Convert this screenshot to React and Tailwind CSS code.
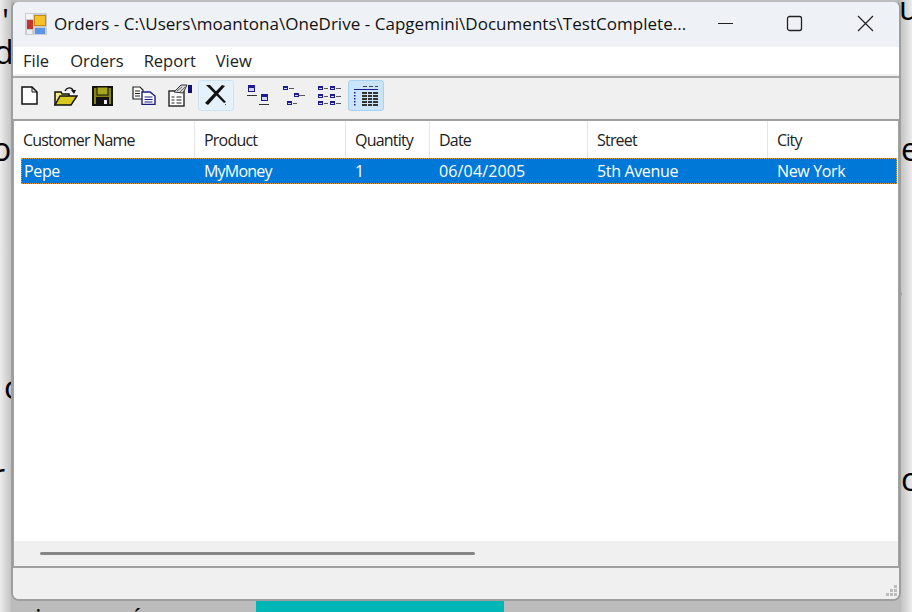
import React from 'react';

const font = { fontFamily: '"Open Sans", "Noto Sans", sans-serif' };

const columns = [
  { title: 'Customer Name', cell: 'Pepe', width: 'w-[181px]', track: 'tracking-[-0.35px]' },
  { title: 'Product', cell: 'MyMoney', width: 'w-[151px]', track: 'tracking-[-0.8px]' },
  { title: 'Quantity', cell: '1', width: 'w-[84px]', track: 'tracking-[-0.35px]' },
  { title: 'Date', cell: '06/04/2005', width: 'w-[158px]', track: 'tracking-[0.15px]' },
  { title: 'Street', cell: '5th Avenue', width: 'w-[180px]', track: 'tracking-[-0.35px]' },
  { title: 'City', cell: 'New York', width: 'flex-1', track: 'tracking-[-0.35px]' },
];

function AppIcon() {
  return (
    <svg width="22" height="22" viewBox="0 0 22 22">
      <rect width="22" height="22" fill="#c9ccd0" />
      <rect x="1" y="1" width="7" height="5" fill="#f4f4f4" />
      <rect x="9.5" y="2.5" width="11" height="10" fill="#f6c22c" stroke="#c08a10" />
      <rect x="2" y="7" width="6" height="9" fill="#c8322b" />
      <rect x="10" y="15" width="10" height="6" fill="#5b96e4" />
      <rect x="2" y="17" width="5" height="4" fill="#f0f0f0" />
    </svg>
  );
}

function NewIcon() {
  return (
    <svg width="17" height="19" viewBox="0 0 17 19">
      <path d="M1 1H11L16 6V18H1Z" fill="#fff" stroke="#111" strokeWidth="1.5" />
      <path d="M11 1V6H16" fill="none" stroke="#111" />
    </svg>
  );
}

function OpenIcon() {
  return (
    <svg width="25" height="20" viewBox="0 0 25 20">
      <path d="M2 19V6H8L9 8H16V10" fill="#f4ee80" stroke="#111" strokeWidth="1.5" />
      <path d="M2 19L7 10H24L18 19Z" fill="#d8c820" stroke="#111" strokeWidth="1.5" />
      <path d="M12 5C14 1 18 1 20 4" fill="none" stroke="#111" strokeWidth="1.4" />
      <path d="M18 4H23L21 8Z" fill="#111" />
    </svg>
  );
}

function SaveIcon() {
  return (
    <svg width="21" height="20" viewBox="0 0 21 20">
      <rect width="21" height="20" fill="#111" />
      <rect x="2" y="2" width="17" height="16" fill="#858510" />
      <rect x="5" y="1" width="11" height="8" fill="#a5a520" stroke="#111" />
      <rect x="4" y="11" width="13" height="9" fill="#111" />
      <rect x="12" y="14" width="3" height="4" fill="#eee" />
    </svg>
  );
}

function CopyIcon() {
  return (
    <svg width="24" height="19" viewBox="0 0 24 19">
      <path d="M1 1H8L11 4V13H1Z" fill="#fff" stroke="#222" strokeWidth="1.2" />
      <path d="M3 5H8M3 7.5H8M3 10H8" stroke="#222" />
      <path d="M10 6H18L23 10V18.5H10Z" fill="#fff" stroke="#1a1a80" strokeWidth="1.4" />
      <path d="M12.5 11H20.5M12.5 13.5H20.5M12.5 16H20.5" stroke="#1a1a80" />
    </svg>
  );
}

function PropsIcon() {
  return (
    <svg width="25" height="23" viewBox="0 0 25 23">
      <rect x="1" y="7" width="15" height="15" fill="#fff" stroke="#222" strokeWidth="1.4" />
      <path d="M3.5 13H6.5M8.5 13H13.5M3.5 16H6.5M8.5 16H13.5M3.5 19H6.5M8.5 19H13.5" stroke="#222" />
      <path d="M6 8L13 1H19L15 9Z" fill="#d8d8d8" stroke="#333" />
      <path d="M9 7L14 3M12 8L17 3" stroke="#666" />
      <rect x="20" y="1" width="4" height="8" fill="#10107a" />
    </svg>
  );
}

function DeleteIcon() {
  return (
    <svg width="22" height="21" viewBox="0 0 22 21">
      <path d="M1 0L5 0L21 17L19 18Z" fill="#111" />
      <path d="M20 1L17 0L0 18L3 20Z" fill="#111" />
      <rect x="20" y="19" width="1" height="1" fill="#666" />
    </svg>
  );
}

function Doc({ x, y, w = 5, h = 4 }) {
  const inner = h > 4 ? 3 : 1;
  return (
    <g>
      <rect x={x} y={y} width={w} height={h} fill="#1c1c90" />
      <rect x={x + 1} y={y + h - inner - 1} width={w - 2} height={inner} fill="#d4d4f2" />
    </g>
  );
}

function Dash({ x, y, w }) {
  return <rect x={x} y={y} width={w} height="1" fill="#555" />;
}

function LargeIcon() {
  return (
    <svg width="22" height="21" viewBox="0 0 22 21">
      <Doc x={1} y={0} w={7} h={7} />
      <rect x="0" y="10" width="10" height="1" fill="#333" />
      <Doc x={14} y={9} w={7} h={7} />
      <rect x="12" y="19" width="10" height="1" fill="#333" />
    </svg>
  );
}

function SmallIcon() {
  return (
    <svg width="22" height="20" viewBox="0 0 22 20">
      <Doc x={0} y={0} />
      <Dash x={6} y={2} w={5} />
      <Doc x={11} y={7} />
      <Dash x={16} y={9} w={6} />
      <Doc x={4} y={15} />
      <Dash x={10} y={17} w={4} />
    </svg>
  );
}

function ListIcon() {
  const rows = [0, 8, 15];
  return (
    <svg width="24" height="20" viewBox="0 0 24 20">
      {rows.map((y) => (
        <g key={y}>
          <Doc x={1} y={y} />
          <Dash x={7} y={y + 2} w={4} />
          <Doc x={13} y={y} />
          <Dash x={19} y={y + 2} w={5} />
        </g>
      ))}
    </svg>
  );
}

function DetailsIcon() {
  const rows = [6, 9, 12, 15, 18];
  return (
    <svg width="26" height="20" viewBox="0 0 26 20">
      <path d="M10 0.5H14M16 0.5H20M22 0.5H25" stroke="#444" />
      <path d="M1 3.5H25" stroke="#1c1c90" />
      {rows.map((y) => (
        <g key={y}>
          <rect x="1" y={y} width="1.5" height="1.5" fill="#1c1c90" />
          <path d={`M9 ${y + 1}H14M15 ${y + 1}H19M20 ${y + 1}H25`} stroke="#333" strokeWidth="2" />
        </g>
      ))}
    </svg>
  );
}

function Tool({ children, active, className = '' }) {
  let look = '';
  if (active === 'soft') look = 'rounded-[3px] border border-[#cde4f7] bg-[#e5f1fb] ';
  if (active === 'strong') look = 'rounded-[3px] border border-[#a6d3f5] bg-[#cce4f7] ';
  return (
    <div className={'flex h-[31px] items-center justify-center ' + look + className}>
      {children}
    </div>
  );
}

function Toolbar() {
  return (
    <div className="flex h-[41px] shrink-0 items-start bg-[#f0f0f0] pl-[8px] pt-[2px]">
      <Tool className="w-[17px]"><NewIcon /></Tool>
      <Tool className="ml-[15px] w-[25px]"><OpenIcon /></Tool>
      <Tool className="ml-[14px] w-[21px]"><SaveIcon /></Tool>
      <Tool className="ml-[19px] w-[24px]"><CopyIcon /></Tool>
      <Tool className="ml-[12px] w-[25px]"><PropsIcon /></Tool>
      <Tool active="soft" className="ml-[5px] w-[36px]"><DeleteIcon /></Tool>
      <Tool className="ml-[13px] w-[22px]"><LargeIcon /></Tool>
      <Tool className="ml-[14px] w-[22px]"><SmallIcon /></Tool>
      <Tool className="ml-[12px] w-[24px]"><ListIcon /></Tool>
      <Tool active="strong" className="ml-[7px] w-[36px]"><DetailsIcon /></Tool>
    </div>
  );
}

function OrdersTable() {
  return (
    <div className="flex min-h-0 flex-1 flex-col border-x border-y-2 border-[#a0a0a0] bg-white">
      <div className="flex h-[37px] shrink-0 text-[#222]">
        {columns.map((col, idx) => (
          <div
            key={col.title}
            className={col.width + ' flex items-center pl-[9px] text-[16px] tracking-[-0.8px] ' + (idx < 5 ? 'border-r border-[#e5e5e5]' : '')}
          >
            {col.title}
          </div>
        ))}
      </div>
      <div className="ml-[7px] mr-[1px] flex h-[26px] shrink-0 border border-dotted border-[#e09a40] bg-[#0078d7] text-white">
        {columns.map((col, idx) => (
          <div
            key={col.title}
            className={(idx === 0 ? 'w-[173px] pl-[2px] ' : col.width + ' pl-[9px] ') + 'flex items-center text-[16px] ' + col.track}
          >
            {col.cell}
          </div>
        ))}
      </div>
      <div className="flex-1" />
      <div className="flex h-[25px] shrink-0 items-center bg-[#f0f0f0] pl-[26px]">
        <div className="h-[3px] w-[435px] rounded-full bg-[#858585]" />
      </div>
    </div>
  );
}

function Backdrop() {
  const glyphs = [
    ['left-[2px] top-[-1px]', "'"],
    ['left-[-6px] top-[30px]', 'd'],
    ['left-[-8px] top-[127px]', 'o'],
    ['left-[4px] top-[365px]', 'c'],
    ['left-[-8px] top-[453px]', 'r'],
    ['left-[901px] top-[127px]', 'e'],
    ['left-[901px] top-[457px]', 'c'],
    ['left-[899px] top-[-14px]', 'u'],
  ];
  return (
    <>
      {glyphs.map(([pos, ch]) => (
        <span key={pos} className={'absolute text-[32px] leading-[44px] text-black ' + pos}>{ch}</span>
      ))}
      <span className="absolute left-[892px] top-[281px] text-[18px] leading-[24px] text-[#444]">e</span>
      <span className="absolute left-[35px] top-[602px] text-[26px] leading-[30px] text-black">i</span>
      <span className="absolute left-[133px] top-[602px] text-[26px] leading-[30px] text-black">í</span>
      <div className="absolute left-[256px] top-[600px] h-[12px] w-[248px] bg-[#00b6b6]" />
    </>
  );
}

export default function App() {
  return (
    <div className="relative h-[612px] w-[912px] overflow-hidden bg-[#bcbcbc]" style={font}>
      <div className="absolute inset-y-0 left-0 w-[11px] bg-gradient-to-r from-[#ececec] to-[#c4c4c4]" />
      <div className="absolute inset-y-0 right-0 w-[11px] bg-gradient-to-l from-[#ececec] to-[#c4c4c4]" />
      <Backdrop />

      <div className="absolute left-[11px] top-0 flex h-[601px] w-[890px] flex-col overflow-hidden rounded-[8px] border-2 border-[#9e9e9e] border-t-[#bdbdbd] bg-[#f0f0f0]">
        <div className="flex h-[45px] shrink-0 items-center bg-[#eef2f7] pb-[2px] pl-[12px]">
          <AppIcon />
          <span className="ml-[7px] w-[640px] truncate text-[17px] tracking-[0.03px] text-[#111]">
            Orders - C:\Users\moantona\OneDrive - Capgemini\Documents\TestComplete...
          </span>
          <svg className="ml-[23px]" width="17" height="17" viewBox="0 0 17 17">
            <path d="M1 8.5H16" stroke="#222" strokeWidth="1.2" />
          </svg>
          <svg className="ml-[52px]" width="17" height="17" viewBox="0 0 17 17">
            <rect x="1.5" y="1.5" width="14" height="14" rx="2" fill="none" stroke="#222" strokeWidth="1.3" />
          </svg>
          <svg className="ml-[54px]" width="17" height="17" viewBox="0 0 17 17">
            <path d="M1 1L16 16M16 1L1 16" stroke="#222" strokeWidth="1.2" />
          </svg>
        </div>

        <div className="flex h-[27px] shrink-0 items-center bg-white pl-[10px] pt-[1px] text-[16.5px] text-[#222]">
          <span>File</span>
          <span className="ml-[21px]">Orders</span>
          <span className="ml-[20px]">Report</span>
          <span className="ml-[20px]">View</span>
        </div>
        <div className="h-[2px] shrink-0 bg-[#f0f0f0]" />
        <div className="h-[2px] shrink-0 bg-[#a8a8a8]" />

        <Toolbar />
        <OrdersTable />

        <div className="relative h-[31px] shrink-0 bg-[#f0f0f0]">
          <svg className="absolute bottom-[1px] right-[1px]" width="14" height="14" viewBox="0 0 14 14" fill="#bdbdbd">
            <rect x="10" y="1" width="3" height="3" />
            <rect x="6" y="5" width="3" height="3" />
            <rect x="10" y="5" width="3" height="3" />
            <rect x="2" y="9" width="3" height="3" />
            <rect x="6" y="9" width="3" height="3" />
            <rect x="10" y="9" width="3" height="3" />
          </svg>
        </div>
      </div>
    </div>
  );
}
